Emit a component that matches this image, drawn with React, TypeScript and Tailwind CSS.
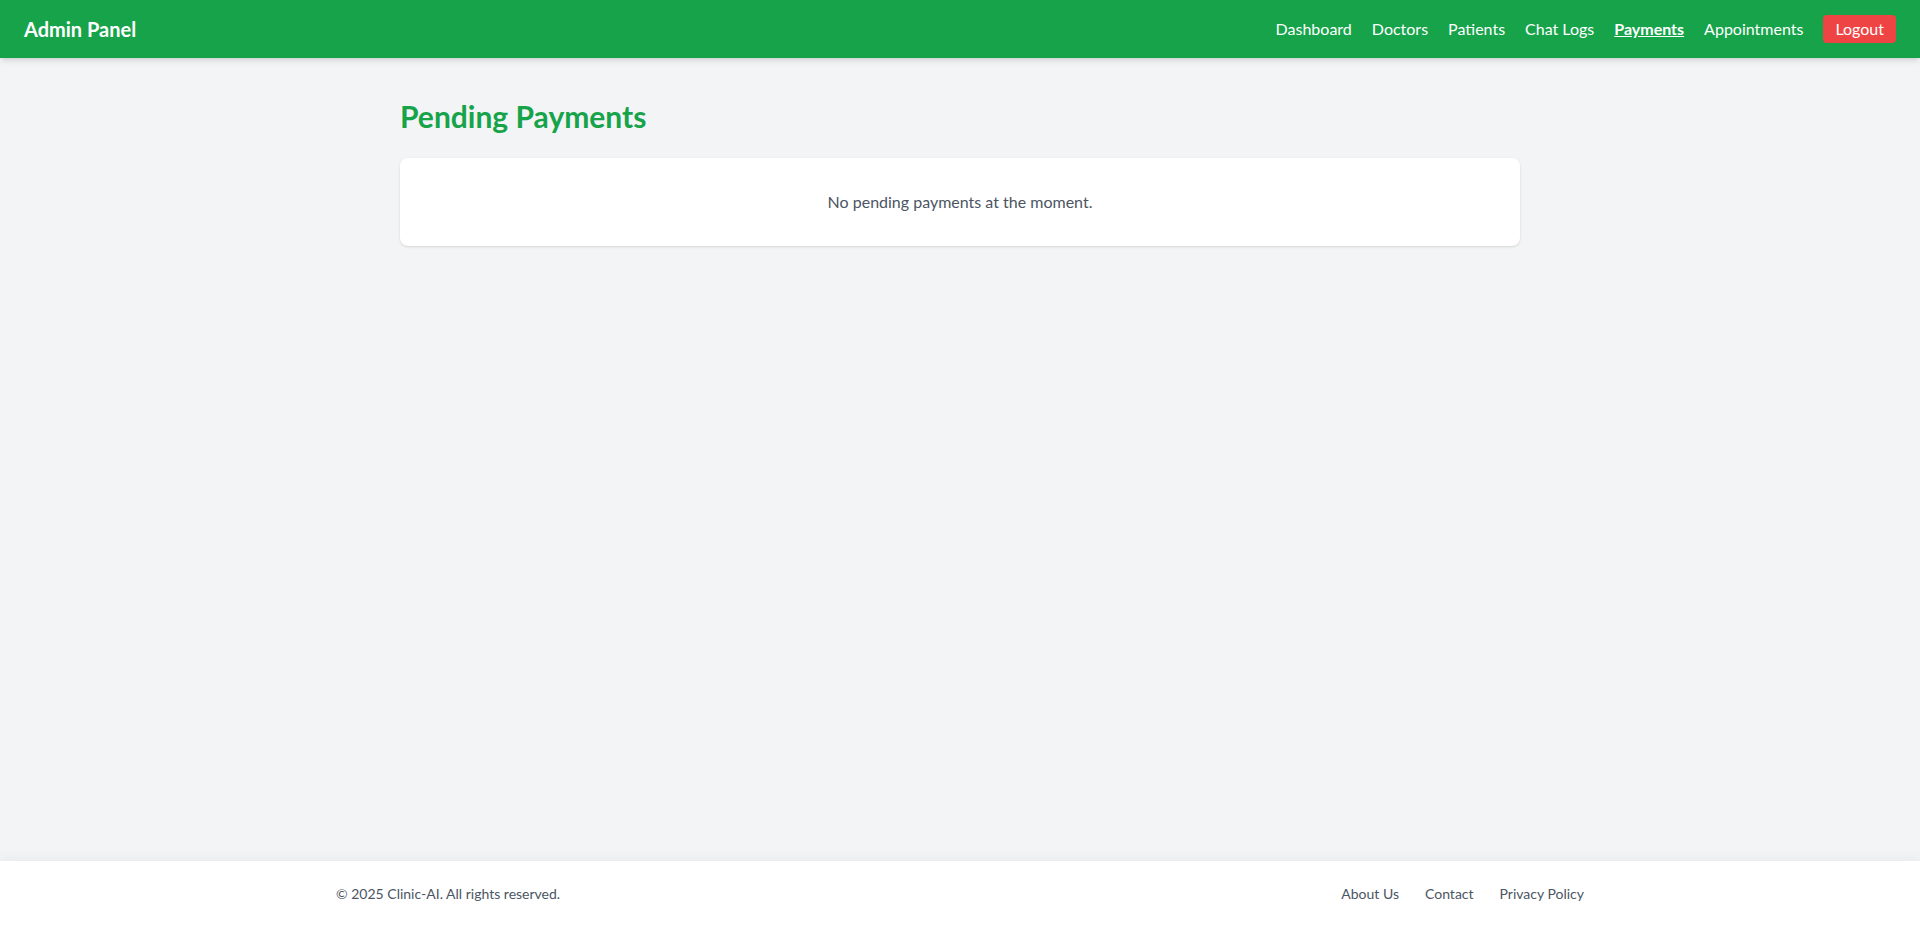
const navLinks = [
  { label: "Dashboard", href: "#dashboard" },
  { label: "Doctors", href: "#doctors" },
  { label: "Patients", href: "#patients" },
  { label: "Chat Logs", href: "#chat-logs" },
  { label: "Payments", href: "#payments", active: true },
  { label: "Appointments", href: "#appointments" },
];

const footerLinks = ["About Us", "Contact", "Privacy Policy"];

export default function App() {
  return (
    <div className="min-h-screen flex flex-col bg-[#f3f4f6] font-['Lato',sans-serif]">
      {/* Top bar */}
      <header className="bg-[#16a34a] shadow-md">
        <div className="flex items-center justify-between px-6 py-[15px]">
          <span className="text-xl font-bold text-white leading-7">Admin Panel</span>
          <nav className="flex items-center gap-5">
            {navLinks.map(({ label, href, active }) => (
              <a
                key={label}
                href={href}
                className={`text-base text-white hover:underline ${active ? "font-bold underline" : ""}`}
              >
                {label}
              </a>
            ))}
            <button className="bg-[#ef4444] hover:bg-[#dc2626] text-white text-base px-3 py-0.5 rounded">
              Logout
            </button>
          </nav>
        </div>
      </header>

      {/* Content */}
      <main className="flex-1">
        <div className="max-w-6xl mx-auto px-4 py-10">
          <h1 className="text-3xl font-bold text-[#16a34a] mb-6">Pending Payments</h1>
          <div className="bg-white rounded-lg shadow p-8 text-center text-[#4b5563]">
            No pending payments at the moment.
          </div>
        </div>
      </main>

      {/* Footer */}
      <footer className="bg-white shadow-[0_-4px_10px_rgba(0,0,0,0.04)]">
        <div className="max-w-7xl mx-auto px-4 py-[23px] flex items-center justify-between text-sm text-[#4b5563]">
          <span>© 2025 Clinic-AI. All rights reserved.</span>
          <div className="flex items-center gap-[26px]">
            {footerLinks.map((l) => (
              <a key={l} href="#" className="hover:text-[#16a34a]">
                {l}
              </a>
            ))}
          </div>
        </div>
      </footer>
    </div>
  );
}
